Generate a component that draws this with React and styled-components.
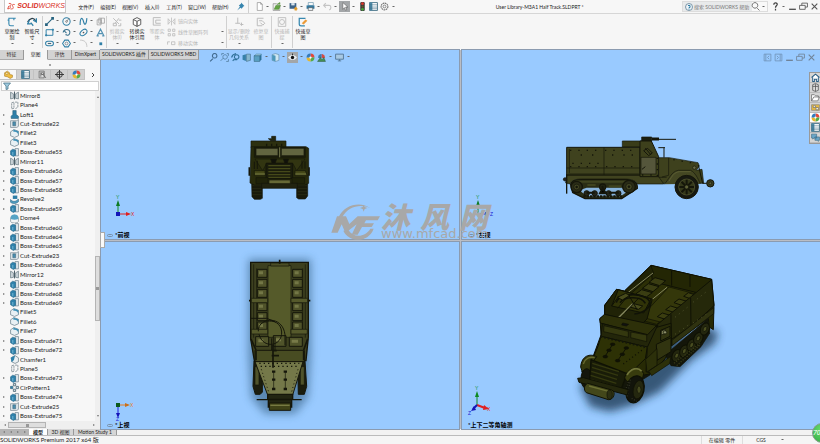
import styled, { createGlobalStyle } from 'styled-components';

const GlobalStyle = createGlobalStyle`
  * {
    box-sizing: border-box;
  }

  body {
    margin: 0;
    font-family: Lato, 'Noto Sans CJK SC', sans-serif;
    font-size: 6px;
    line-height: 8px;
    color: #222;
    background: #f6f6f6;
  }

  button,
  input {
    margin: 0;
    padding: 0;
    border: 0;
    background: none;
    font: inherit;
    color: inherit;
  }
`;

const blue = '#2f7fa6';

/* ---------- icons ---------- */

const glyphs = {
  page: <path d="M4 1h6l3 3v11H4zM10 1v3h3" fill="#fff" stroke="#777" />,
  open: (
    <>
      <path d="M2 3h6l2 2h4v10H2z" fill="#eee" stroke="#777" />
      <path d="M4 13l3-7h8l-3 7zM9 4l5-3v3" fill="#63a343" stroke="#4c8a30" />
    </>
  ),
  save: (
    <>
      <path d="M1 2h12v10H1z" fill="#3b6287" />
      <path d="M4 2h6v4H4z" fill="#dbe6ee" />
      <path d="M12 8l4 5H8zM10 13h4v2h-4z" fill="#e09b2c" />
    </>
  ),
  print: (
    <>
      <path d="M4 1h9v5H4z" fill="#fff" stroke="#4a7c99" />
      <path d="M1 6h14v6H1z" fill="#34799f" />
      <path d="M4 10h8v5H4z" fill="#e9f2f7" stroke="#444" />
    </>
  ),
  undo: <path d="M5 2L1 6l4 4M2 6h9c4 0 4 7 0 8" fill="none" stroke="#c4c4c4" strokeWidth="2" />,
  cursor: <path d="M5 1v12l3-3 2 5 2-1-2-5h4z" fill="#fff" stroke="#555" />,
  traffic: (
    <>
      <rect x="4" y="0" width="8" height="16" rx="2" fill="#3a3a3a" />
      <circle cx="8" cy="3" r="2.5" fill="#d8372c" />
      <circle cx="8" cy="8" r="2" fill="#645821" />
      <circle cx="8" cy="13" r="2.5" fill="#43a53c" />
    </>
  ),
  list: (
    <>
      <path d="M1 1h14v14H1z" fill="#fff" stroke="#39687f" strokeWidth="1.5" />
      <path d="M1 1h5v14H1z" fill="#4c8aa8" />
      <path d="M1 5h14M1 9h14M1 12h14" stroke="#39687f" />
    </>
  ),
  gear: (
    <>
      <circle cx="8" cy="8" r="6" fill="none" stroke="#777" strokeWidth="2" strokeDasharray="3 1" />
      <circle cx="8" cy="8" r="2.5" fill="none" stroke="#777" strokeWidth="1.5" />
    </>
  ),
  pin: <path d="M9 1l6 6-2 1-3 4-2-2-6 5 5-7-2-2 4-3z" fill="#3785ae" />,
  help: (
    <>
      <circle cx="8" cy="8" r="7" fill="#eef4f8" stroke="#5a7b91" strokeWidth="1.5" />
      <path d="M6 5h4v4H8v1M8 11v2" stroke={blue} strokeWidth="2" fill="none" />
    </>
  ),
  search: <path d="M11 11l4 4M7 1a5 5 0 1 0 .1 0z" fill="none" stroke="#666" strokeWidth="1.6" />,
  question: <path d="M5 5c0-5 7-4 6 0-1 2-3 2-3 5M8 12v3" fill="none" stroke="#444" strokeWidth="2.2" />,
  min: <path d="M2 13h12" stroke="#555" strokeWidth="2.4" />,
  restore: <path d="M5 6V2h10v7h-4M1 6h10v7H1z" fill="none" stroke="#555" strokeWidth="1.5" />,
  close: <path d="M3 3l10 10M13 3L3 13" stroke="#555" strokeWidth="2" />,
  dockLeft: <path d="M2 2h12v12H2zM5 2v12M11 5L8 8l3 3" fill="none" stroke="#556f8a" strokeWidth="1.5" />,
  dockRight: <path d="M2 2h12v12H2zM11 2v12M5 5l3 3-3 3" fill="none" stroke="#556f8a" strokeWidth="1.5" />,

  sketch: <path d="M14 2H3v9c0 3 1 3 3 3h5M3 5H1M11 2v3" fill="none" stroke="#3788b0" strokeWidth="1.8" />,
  dimension: (
    <>
      <path d="M1 8c3-6 9-8 13-2" fill="none" stroke="#2d3f49" strokeWidth="2" />
      <path d="M4 5l-3 6 5 0M10 5l5 3V2M6 9l4 5" fill="none" stroke={blue} strokeWidth="2" />
    </>
  ),
  line: <path d="M2 14L14 2M1 12h3v3H1zM12 1h3v3h-3z" fill="none" stroke="#25627f" strokeWidth="1.8" />,
  circle: (
    <>
      <circle cx="8" cy="8" r="6.5" fill="none" stroke={blue} strokeWidth="1.8" />
      <circle cx="8" cy="8" r="1.5" fill="none" stroke="#444" />
      <path d="M9 7l4-5" stroke="#444" />
    </>
  ),
  spline: <path d="M2 14C2 0 6 0 8 8s5 6 6-6" fill="none" stroke={blue} strokeWidth="2" />,
  planes: <path d="M2 5h7v9H2zM9 2h6v9H9zM5 2h4v9H5z" fill="none" stroke="#999" strokeWidth="1.3" />,
  rect: <path d="M2 3h12v10H2zM1 12h2v2H1zM13 2h2v2h-2z" fill="none" stroke={blue} strokeWidth="1.7" />,
  arc: <path d="M2 8c1-7 11-7 12-1 0 4-3 6-6 6M4 5l4 4M6 12h3" fill="none" stroke="#3c7490" strokeWidth="1.8" />,
  ellipse: (
    <>
      <ellipse cx="8" cy="8" rx="7" ry="4.5" transform="rotate(-40 8 8)" fill="none" stroke={blue} strokeWidth="1.8" />
      <circle cx="8" cy="8" r="1.5" fill="#555" />
    </>
  ),
  letter: <path d="M2 14L8 2l6 12M5 10h6M1 14h4M11 14h4" fill="none" stroke="#5593b3" strokeWidth="2" />,
  slot: (
    <>
      <rect x="1" y="4" width="14" height="8" rx="4" fill="none" stroke={blue} strokeWidth="1.8" />
      <path d="M5 7h6v2H5z" fill="#4a6573" />
    </>
  ),
  polygon: (
    <>
      <path d="M5 2h6l4 6-4 6H5L1 8z" fill="none" stroke={blue} strokeWidth="1.8" />
      <circle cx="8" cy="8" r="2.5" fill="none" stroke="#456" />
    </>
  ),
  fillet: <path d="M2 2c8 0 12 4 12 12" fill="none" stroke="#c2c2c2" strokeWidth="1.6" />,
  point: <path d="M6 6h5v5H6z" fill={blue} />,
  trim: <path d="M2 2l9 9M11 2l-6 8M2 10h5v4H2zM11 5h4M10 14h4v-4" fill="none" stroke="#bcbcbc" strokeWidth="1.6" />,
  convert: (
    <>
      <path d="M8 1l6 3v8l-6 3-6-3V4zM2 4l6 3 6-3" fill="#fff" stroke="#555" strokeWidth="1.5" />
      <path d="M8 7v8" stroke="#555" strokeWidth="2" />
    </>
  ),
  offset: <path d="M14 1H2v12h12M14 5H6v5h8" fill="none" stroke="#bcbcbc" strokeWidth="1.6" />,
  mirror: <path d="M2 3l4 5-4 5zM14 3l-4 5 4 5zM8 1v14" fill="none" stroke="#bcbcbc" strokeWidth="1.4" />,
  pattern: <path d="M2 2h4v4H2zM10 2h4v4h-4zM2 10h4v4H2zM10 10h4v4h-4z" fill="none" stroke="#bcbcbc" strokeWidth="1.5" />,
  move: <path d="M1 10V5h4M8 5h6v5H8z" fill="none" stroke="#bcbcbc" strokeWidth="1.5" />,
  relation: <path d="M6 1v9M2 10h8M10 12h5M12 9v5" fill="none" stroke="#bcbcbc" strokeWidth="1.6" />,
  repair: <path d="M12 2H2v12h8M5 6h5l4 4-3 3-4-4" fill="none" stroke="#bcbcbc" strokeWidth="1.6" />,
  snap: (
    <>
      <path d="M2 1h12v14H2z" fill="none" stroke="#bcbcbc" strokeWidth="1.4" />
      <circle cx="8" cy="8" r="4" fill="none" stroke="#bcbcbc" strokeWidth="1.4" />
    </>
  ),
  rapid: (
    <>
      <path d="M12 2H2v9c0 2 1 3 3 3h6" fill="none" stroke="#3788b0" strokeWidth="2" />
      <path d="M6 10l6-6 3 2-6 6z" fill="#eb9b38" />
    </>
  ),

  zoom: <path d="M2 15l5-5M10 1a4 4 0 1 0 .1 0z" fill="none" stroke="#41698d" strokeWidth="2" />,
  zoomArea: <path d="M1 14l5-5M9 3a4 4 0 1 0 .1 0zM3 4V1h4M12 1h3v4M15 11v4h-4" fill="none" stroke="#5883a5" strokeWidth="1.5" />,
  previous: <path d="M3 14l3-3M10 3a4 4 0 1 0 .1 0zM1 8c1-4 4-6 8-7M11 12H4" fill="none" stroke="#2f7098" strokeWidth="2" />,
  section: (
    <>
      <path d="M1 4l6-2v12l-6-2z" fill="#3680a8" />
      <path d="M8 2h7v11l-7 2z" fill="#87b7cd" stroke="#3d6980" />
    </>
  ),
  cube: (
    <>
      <path d="M2 5l4-3h9l-3 3z" fill="#b6dded" stroke="#3d7590" />
      <path d="M2 5h10v10H2z" fill="#5aa0c2" stroke="#35657d" />
      <path d="M12 5l3-3v9l-3 4z" fill="#2c7197" />
    </>
  ),
  display: (
    <>
      <path d="M2 3l6-2 6 2v10l-6 2-6-2z" fill="#cfe7f2" stroke="#56809a" />
      <path d="M2 3l6 2v10l-6-2z" fill="#4d97ba" />
    </>
  ),
  eye: (
    <>
      <path d="M0 8c4-6 12-6 16 0-4 6-12 6-16 0z" fill="#e8eef3" />
      <circle cx="8" cy="8" r="3" fill="#111" />
      <path d="M8 1v3" stroke="#222" strokeWidth="1.5" />
    </>
  ),
  appearance: (
    <>
      <path d="M8 8V1a7 7 0 0 1 7 7z" fill="#e3493b" />
      <path d="M8 8h7a7 7 0 0 1-7 7z" fill="#55aa48" />
      <path d="M8 8v7a7 7 0 0 1-7-7z" fill="#e7b72e" />
      <path d="M8 8H1a7 7 0 0 1 7-7z" fill="#337bbd" />
      <circle cx="8" cy="8" r="2" fill="#fff" />
    </>
  ),
  scene: (
    <>
      <path d="M8 9V2a6 6 0 0 1 6 7z" fill="#d84b43" />
      <path d="M8 9H2a6 6 0 0 1 6-7z" fill="#3a7cb2" />
      <path d="M1 15l5-7 3 4 3-4 3 7z" fill="#449055" stroke="#365f43" />
    </>
  ),
  monitor: <path d="M1 2h14v9H1zM8 11v3M5 14h6" fill="#a8c9e3" stroke="#547694" strokeWidth="1.6" />,

  part: (
    <>
      <path d="M1 5l5-3 4 3v3l5 1v4l-4 2-5-3-5-1z" fill="#efbd42" stroke="#a5771f" />
      <circle cx="5" cy="6" r="2" fill="#fff2be" stroke="#a5771f" />
    </>
  ),
  config: (
    <>
      <path d="M2 2h9v12H2zM5 4v8" fill="#ddd" stroke="#666" strokeWidth="1.4" />
      <path d="M6 5h4v3H6zM9 8l5 6" fill="#fff" stroke="#555" strokeWidth="1.4" />
    </>
  ),
  target: (
    <>
      <circle cx="8" cy="8" r="5" fill="none" stroke="#333" strokeWidth="1.7" />
      <path d="M8 0v16M0 8h16" stroke="#333" strokeWidth="1.7" />
    </>
  ),
  filter: <path d="M1 2h14l-5 6v6l-4 1V8z" fill="#9fcbe0" stroke="#457184" strokeWidth="1.5" />,

  Mirror: (
    <>
      <path d="M1 2l5 3v8l-5 1zM15 2l-5 3v8l5 1z" fill="#ccd6db" stroke="#61747e" strokeWidth="1.2" />
      <path d="M8 1v14" stroke="#3a4f5a" strokeWidth="1.6" />
    </>
  ),
  Plane: <path d="M3 3l4-1v11l-4 1zM9 2h5v9l-5 3" fill="none" stroke="#6c7b84" strokeWidth="1.3" strokeDasharray="4 1" />,
  Loft: <path d="M5 1h6v7l4 3v4H2v-4l3-3z" fill="#2e7fa8" stroke="#2a5e79" />,
  Cut: (
    <>
      <path d="M1 3h11l3-2v12l-3 2H1z" fill="#e0e8ec" stroke="#70828c" strokeWidth="1.2" />
      <path d="M5 5h5v7H5z" fill="#488eb0" stroke="#406476" />
    </>
  ),
  Fillet: (
    <>
      <path d="M1 5l6-4 8 3v8l-7 3-7-3z" fill="#e8f0f4" stroke="#5f7885" strokeWidth="1.2" />
      <path d="M6 1l9 3v7c-1-5-4-7-9-6z" fill="#3d90b7" />
    </>
  ),
  Boss: (
    <>
      <path d="M9 1h6v13H9z" fill="#e2e9ed" stroke="#687e8a" strokeWidth="1.2" />
      <path d="M1 5l4-3 5 2v9l-4 2-5-3z" fill="#2e81ab" stroke="#1f5f80" />
      <path d="M5 7v6" stroke="#8cc6df" strokeWidth="1.4" />
    </>
  ),
  Revolve: (
    <>
      <path d="M5 1h8v6H5z" fill="#2c7da6" />
      <path d="M1 8c4 5 10 4 14-1v5c-4 4-10 4-14 1z" fill="#4e9dc0" stroke="#235f7e" />
    </>
  ),
  Dome: (
    <>
      <path d="M1 8a7 6 0 0 1 14 0v5a7 3 0 0 1-14 0z" fill="#f2f5f6" stroke="#60747e" />
      <path d="M1 8a7 7 0 0 1 14 0 7 2 0 0 1-14 0z" fill="#56a4c6" />
    </>
  ),
  Chamfer: (
    <>
      <path d="M3 4l6-3 6 4v7l-6 3-6-3z" fill="#eaf0f3" stroke="#5d717c" strokeWidth="1.2" />
      <path d="M1 5l8-4-2 8-4 4z" fill="#2e81ab" />
    </>
  ),
  CirPattern: (
    <>
      <path d="M6 1h4v4H6zM1 6h4v4H1zM11 6h4v4h-4zM6 11h4v4H6z" fill="#d7e3e9" stroke="#45616f" strokeWidth="1.4" />
      <path d="M1 6h4v4H1z" fill={blue} />
    </>
  ),

  home: <path d="M1 8l7-6 7 6M3 8v7h3v-4h4v4h3V8" fill="#fff" stroke="#2c5f85" strokeWidth="1.8" />,
  library: <path d="M3 3l5-2 5 2v10l-5 2-5-2zM8 2v13M3 6h10" fill="#ddd" stroke="#555" strokeWidth="1.4" />,
  folder: <path d="M1 14V3h5l2 2h5v3M1 14l4-7h10l-3 7z" fill="#fff" stroke="#666" strokeWidth="1.3" />,
  palette: (
    <>
      <path d="M1 3h14v10H1z" fill="#e5b944" stroke="#777" />
      <path d="M4 5h4v3H4zM9 8h4v4H9z" fill="#fff" stroke="#555" />
    </>
  ),
  forum: <path d="M1 2h9v7H5l-2 2V9H1zM7 7h8v6h-2v2l-2-2H7z" fill="#6aa6c8" stroke="#35637e" />,
};

const Svg = styled.svg`
  display: block;
  flex: none;
  width: ${({ $size }) => $size}px;
  height: ${({ $size }) => $size}px;
  opacity: ${({ $faded }) => ($faded ? 0.6 : 1)};
`;

const Icon = ({ name, size = 9, faded }) => (
  <Svg viewBox="0 0 16 16" $size={size} $faded={faded} aria-hidden="true">
    {glyphs[name]}
  </Svg>
);

const Caret = styled.span`
  flex: none;
  align-self: center;
  margin: 0 2px;
  border: 1px solid transparent;
  border-top-color: #666;
  border-bottom: 0;
  width: 3px;
  height: 2px;
`;

const IconButton = styled.button`
  display: flex;
  flex: none;
  align-items: center;
  justify-content: center;
  width: ${({ $width }) => $width || 11}px;
  height: ${({ $height }) => $height || 11}px;
  background: ${({ $active }) => ($active ? '#a3a6a8' : 'transparent')};
`;

/* ---------- frame ---------- */

const Page = styled.div`
  display: flex;
  flex-direction: column;
  height: 100vh;
  overflow: hidden;
  position: relative;
`;

const TitleBar = styled.header`
  display: flex;
  align-items: center;
  height: 14px;
  border-bottom: 1px solid #d6d6d6;
  background: #f7f7f7;
`;

const Brand = styled.div`
  display: flex;
  align-items: center;
  gap: 2px;
  width: 62px;
  height: 13px;
  margin-left: 4px;
  padding-left: 2px;
  border: 1px solid #c8c8c8;
  border-top: 0;
  background: #fff;
  font: italic 7px/10px 'Liberation Sans', sans-serif;
  color: #d9301f;
`;

const Menu = styled.nav`
  display: flex;
  gap: 6px;
  margin-left: 12px;
  font-size: 5px;
  white-space: nowrap;
`;

const MenuItem = styled.button`
  min-width: 16px;
`;

const Divider = styled.span`
  flex: none;
  align-self: stretch;
  width: 1px;
  margin: ${({ $space }) => $space || 0}px 0;
  background: #d0d0d0;
`;

const QuickTools = styled.div`
  display: flex;
  align-items: center;
  align-self: stretch;
  margin-left: 5px;
`;

const DocumentTitle = styled.h1`
  flex: 1;
  margin: 0;
  text-align: center;
  font-size: 5px;
  font-weight: 400;
`;

const SearchBox = styled.label`
  display: flex;
  align-items: center;
  width: 86px;
  height: 11px;
  padding-left: 2px;
  border: 1px solid #ddd;
  background: linear-gradient(90deg, #e8eaeb 69px, #f9f9f9 69px);
`;

const SearchInput = styled.input`
  flex: 1;
  min-width: 0;
  margin-left: 1px;
  font-size: 5px;

  &::placeholder {
    color: #777;
    opacity: 1;
  }
`;

const WindowButtons = styled.div`
  display: flex;
  align-items: center;
  margin-left: 2px;
`;

const Ribbon = styled.section`
  display: flex;
  align-items: stretch;
  height: 36px;
  padding-left: 2px;
  background: #f6f6f6;
  font-size: 5px;
  line-height: 6px;
`;

const BigButton = styled.button`
  display: flex;
  flex-direction: column;
  align-items: center;
  gap: 1px;
  width: ${({ $wide }) => ($wide ? 24 : 20)}px;
  padding-top: 3px;
  color: ${({ disabled }) => (disabled ? '#b5b5b5' : '#222')};
  white-space: pre;
`;

const BigText = styled.span`
  height: 14px;
`;

const SketchGrid = styled.div`
  display: grid;
  grid-template-columns: repeat(3, 10px 7px) 10px;
  grid-template-rows: repeat(3, 11px);
  align-content: center;
  align-items: center;
  padding: 0 1px;
`;

const RowGroup = styled.div`
  display: flex;
  flex-direction: column;
  justify-content: center;
  width: 59px;
`;

const RowButton = styled.button`
  display: flex;
  align-items: center;
  gap: 2px;
  height: 11px;
  color: #b5b5b5;
`;

const Push = styled.span`
  flex: 1;
`;

const Body = styled.div`
  display: flex;
  flex: 1;
  min-height: 0;
  position: relative;
`;

const CommandTabs = styled.nav`
  display: flex;
  position: absolute;
  left: 0;
  top: 0;
  z-index: 2;
  height: 10px;
  font-size: 5px;
`;

const CommandTab = styled.button`
  width: ${({ $width }) => $width}px;
  border-right: 1px solid #999;
  border-bottom: 1px solid ${({ $active }) => ($active ? '#f6f6f6' : '#aaa')};
  background: ${({ $active }) => ($active ? '#f6f6f6' : '#d3d3d3')};
  line-height: 9px;
  white-space: nowrap;
`;

/* ---------- feature tree ---------- */

const Sidebar = styled.aside`
  display: flex;
  flex-direction: column;
  flex: none;
  width: 101px;
  padding-top: 10px;
  border-right: 1px solid #9aa5ae;
  background: #f7f7f7;
`;

const Grip = styled.div`
  height: 9px;
  display: grid;
  place-items: center;

  &::after {
    content: '';
    width: 2px;
    height: 2px;
    background: #888;
    border-radius: 50%;
  }
`;

const ManagerTabs = styled.div`
  display: flex;
  height: 11px;
`;

const ManagerTab = styled(IconButton)`
  width: 17px;
  border: 1px solid #c2c2c2;
  border-left: 0;
  background: ${({ $active }) => ($active ? '#f7f7f7' : '#d0d0d0')};
`;

const FilterBox = styled.label`
  display: flex;
  align-items: center;
  gap: 2px;
  height: 10px;
  margin: 1px 1px 0;
  padding-left: 1px;
  border: 1px solid #d0d0d0;
  background: #fff;
`;

const FilterInput = styled.input`
  flex: 1;
  min-width: 0;
`;

const TreeArea = styled.div`
  display: flex;
  flex: 1;
  min-height: 0;
`;

const Tree = styled.ul`
  display: flex;
  flex: 1;
  flex-direction: column;
  margin: 0;
  padding: 0;
  list-style: none;
`;

const TreeItem = styled.li`
  display: flex;
  flex: 1;
  align-items: center;
  min-height: 0;
`;

const Twisty = styled.span`
  width: 10px;
  padding-left: 3px;

  &::before {
    content: '';
    display: ${({ $shown }) => ($shown ? 'block' : 'none')};
    width: 2px;
    border: 1px solid transparent;
    border-left: 2px solid #777;
    border-right: 0;
  }
`;

const TreeLabel = styled.span`
  margin-left: 1px;
`;

const ScrollTrack = styled.div`
  display: flex;
  flex-direction: ${({ $across }) => ($across ? 'row' : 'column')};
  align-items: center;
  ${({ $across }) => ($across ? 'height: 8px; padding: 0 4px 0 3px;' : 'width: 5px; padding: 4px 0 3px;')}
  background: #efefef;
`;

const ScrollGap = styled.span`
  flex: ${({ $grow }) => $grow};
`;

const ScrollArrow = styled.span`
  border: 1px solid transparent;
  border-${({ $side }) => $side}: 2px solid #777;
`;

const Thumb = styled.div`
  flex: ${({ $grow }) => $grow};
  ${({ $across }) => ($across ? 'height: 6px;' : 'width: 5px;')}
  display: grid;
  place-items: center;
  border: 1px solid #b4b4b4;
  background: #dedede;

  &::after {
    content: '';
    width: 3px;
    height: 3px;
    background: #999;
  }
`;

/* ---------- viewport ---------- */

const Viewport = styled.main`
  display: grid;
  flex: 1;
  grid-template-columns: 1fr 1fr;
  grid-template-rows: 189fr 187fr;
  gap: 3px;
  position: relative;
  background: #babdc4;
`;

const Pane = styled.section`
  display: flex;
  flex-direction: column;
  position: relative;
  min-height: 0;
  outline: 1px solid #8b9bb0;
  background: #99caff;
`;

const Drawing = styled.svg`
  position: absolute;
  inset: 0;
  width: 100%;
  height: 100%;
`;

const ViewTools = styled.div`
  display: flex;
  align-items: center;
  justify-content: ${({ $end }) => ($end ? 'flex-end' : 'center')};
  height: 14px;
  padding-right: ${({ $end }) => ($end ? 3 : 0)}px;
  position: relative;
`;

const Triad = styled.svg`
  display: block;
  width: 28px;
  height: 38px;
  margin: auto 0 0 10px;
  overflow: visible;
  position: relative;
  font: 5px 'Liberation Sans', sans-serif;
`;

const ViewName = styled.div`
  display: flex;
  align-items: center;
  gap: 2px;
  height: 8px;
  padding-left: 6px;
  position: relative;
  font-weight: 700;
  color: #000;
`;

const LinkMark = styled.span`
  width: 6px;
  height: 3px;
  border: 1px solid #7990a8;
  border-radius: 2px;
`;

const PanelHandle = styled.button`
  position: absolute;
  left: -1px;
  top: 48%;
  width: 5px;
  height: 16px;
  border: 1px solid #aaa;
  background: #fafafa;
`;

const Watermark = styled.div`
  display: flex;
  position: absolute;
  left: 32%;
  top: 40%;
  color: #a8a8a8;
`;

const WatermarkLogo = styled.svg`
  width: 50px;
  height: 40px;
`;

const WatermarkName = styled.div`
  display: flex;
  gap: 10px;
  font: italic 900 29px/26px 'Noto Sans CJK SC', sans-serif;
`;

const WatermarkSite = styled.div`
  font: 13px/11px 'DejaVu Sans', sans-serif;
`;

const TaskPane = styled.nav`
  position: absolute;
  right: 0;
  top: 22px;
  width: 11px;
  border: 1px solid #999;
  border-right: 0;
  background: #d5d5d5;
`;

const TaskTab = styled(IconButton)`
  width: 10px;
  height: 10px;
  background: ${({ $active }) => ($active ? '#fff' : '#d5d5d5')};
  border-bottom: 1px solid #bbb;
`;

/* ---------- footer ---------- */

const SheetTabs = styled.nav`
  display: flex;
  height: 7px;
  border-bottom: 1px solid #bbb;
  background: #f2f2f2;
  font-size: 5px;
  line-height: 6px;
`;

const SheetNav = styled.div`
  display: flex;
  align-items: center;
  justify-content: space-around;
  width: 29px;
  background: #b5b5b5;
`;

const SheetTab = styled.button`
  width: ${({ $width }) => $width}px;
  border-right: 1px solid #999;
  background: ${({ $active }) => ($active ? '#fff' : '#d6d6d6')};
  font-weight: ${({ $active }) => ($active ? 700 : 400)};
  white-space: nowrap;
`;

const StatusBar = styled.footer`
  display: flex;
  align-items: center;
  height: 8px;
  background: #f5f5f5;
`;

const StatusCell = styled.span`
  width: ${({ $width }) => $width}px;
  border-left: 1px solid #ddd;
  text-align: center;
  font-size: 5px;
`;

const Bubble = styled.div`
  position: absolute;
  right: -12px;
  bottom: 1px;
  width: 20px;
  height: 20px;
  border: 1px solid #8a9a8a;
  border-radius: 50%;
  background: radial-gradient(circle at 50% 30%, #6bdc6f, #2fae42);
  font: italic 7px/18px Roboto, sans-serif;
  color: #fff;
`;

/* ---------- data ---------- */

const menus = ['文件(F)', '编辑(E)', '视图(V)', '插入(I)', '工具(T)', '窗口(W)', '帮助(H)'];

const commandTabs = [
  ['特征', 24],
  ['草图', 24],
  ['评估', 24],
  ['DimXpert', 28],
  ['SOLIDWORKS 插件', 49],
  ['SOLIDWORKS MBD', 50],
];

const sketchTools = [
  ['line', 'circle', 'spline', 'planes'],
  ['rect', 'arc', 'ellipse', 'letter'],
  ['slot', 'polygon', 'fillet', 'point'],
];

const features = [
  'Mirror8', 'Plane4', 'Loft1', 'Cut-Extrude22', 'Fillet2', 'Fillet3', 'Boss-Extrude55',
  'Mirror11', 'Boss-Extrude56', 'Boss-Extrude57', 'Boss-Extrude58', 'Revolve2',
  'Boss-Extrude59', 'Dome4', 'Boss-Extrude60', 'Boss-Extrude64', 'Boss-Extrude65',
  'Cut-Extrude23', 'Boss-Extrude66', 'Mirror12', 'Boss-Extrude67', 'Boss-Extrude68',
  'Boss-Extrude69', 'Fillet5', 'Fillet6', 'Fillet7', 'Boss-Extrude71', 'Boss-Extrude72',
  'Chamfer1', 'Plane5', 'Boss-Extrude73', 'CirPattern1', 'Boss-Extrude74',
  'Cut-Extrude25', 'Boss-Extrude75',
];

const expandable = ['Loft', 'Cut', 'Boss', 'Revolve'];

const taskTabs = ['home', 'library', 'folder', 'palette', 'appearance', 'list', 'forum'];

/* ---------- half track views ---------- */

const ink = '#15160a';

const FrontView = () => (
  <g transform="translate(220 120) scale(.3333)" stroke={ink} strokeWidth="2">
    <path d="M145 56h10v-7h12v13h-15z" fill="#222610" />
    <path d="M93 63h105v20H93z" fill="#2d3010" />
    <path d="M140 71v8M155 71v8M170 71v8M185 71v8" strokeWidth="4" />
    <path d="M95 190h32v45l-6 3h-18l-7-8zM230 190h33v38l-7 9h-20l-6-4z" fill="#191a0b" />
    <path d="M97 197h28M97 206h28M97 215h28M97 224h28M233 197h28M233 206h28M233 215h28M233 224h28" stroke="#2d3018" />
    <path d="M93 80h165l8 5v105l-12 5H103l-13-6z" fill="#282b0c" />
    <path d="M88 142v25M267 142v25" strokeWidth="5" />
    <path d="M103 82h153v30H103z" fill="#1d1f0d" />
    <path d="M108 85h66v22h-66zM184 85h68v22h-68z" fill="#626540" />
    <path d="M179 82v30" stroke="#74764b" strokeWidth="3" />
    <path d="M105 117h150l-25 35-12-22h-78l-12 22z" fill="#323511" />
    <path d="M152 117h18l-4 12h-10zM190 117h16l-4 12h-8z" fill="#11120a" />
    <path d="M138 130h80v46h-80z" fill="#1b1d0c" strokeWidth="3" />
    <path d="M145 137h66M145 146h66M145 155h66M145 164h66M145 172h66" stroke="#454919" strokeWidth="4" />
    <path d="M103 152h32v15h-32zM225 152h31l6 15h-37z" fill="#454818" />
    <path d="M105 162h30M226 162h32" stroke="#747743" strokeWidth="3" />
    <path d="M108 173h36v18h-36zM216 173h38v18h-38z" fill="#202309" />
    <path d="M125 190h107v15H125z" fill="#222410" />
    <path d="M147 180h64v11h-64z" fill="#666936" />
    <path d="M103 125v22M112 122v25M246 121v25M255 124v22" strokeWidth="3" />
  </g>
);

const wheelSpokes = [0, 45, 90, 135, 180, 225, 270, 315];

const SideView = () => (
  <g transform="translate(550 125) scale(.3333)" stroke={ink} strokeWidth="2">
    <path d="M62 178c4-15 20-15 35-15h128c24 0 38 7 37 27l-47 31H105L68 203z" fill="#2a2d15" strokeWidth="4" />
    <path d="M88 196l22-8h110l16 9-24 17H111z" fill="#87b3dc" stroke="none" />
    <path d="M78 170h170M112 180h25M176 184h38" stroke="#3f431f" strokeWidth="6" />
    <path d="M100 214h116" strokeWidth="7" strokeDasharray="7 3" />
    {[[80, 186, 17], [237, 185, 19], [158, 186, 9]].map(([x, y, r]) => (
      <g key={x}>
        <circle cx={x} cy={y} r={r} fill="#2a2c17" strokeWidth="4" />
        <circle cx={x} cy={y} r={r / 2} fill="#444725" />
        <circle cx={x} cy={y} r="3" fill={ink} />
      </g>
    ))}
    {[110, 134, 176, 205].map((x) => (
      <circle key={x} cx={x} cy="205" r="8" fill="#25271b" strokeWidth="3" />
    ))}
    <path d="M110 203h24M176 203h30M158 190l-8 15h18z" strokeWidth="6" />
    <path d="M50 150h300l-10 27h-78c-4-10-20-15-37-15H95c-18 0-30 4-35 15l-13-3z" fill="#40431f" />
    <path d="M217 48h87v18h-87z" fill="#393c19" />
    <path d="M275 36h30v12h-30z" fill="#1c1f0f" />
    <path d="M305 42h22" strokeWidth="9" />
    <path d="M326 43h52" strokeWidth="3" />
    <path d="M50 67h220v83H50z" fill="#3f421e" strokeWidth="3" />
    <path d="M50 129h220M55 147h212M162 67v83M58 72v72" />
    <path d="M270 48h34l22 47v60h-56z" fill="#3d401c" strokeWidth="3" />
    <path d="M273 97h45v50h-45z" fill="#55563b" />
    <path d="M281 77l12-7 14 14-11 8zM286 69l17 21" fill="none" strokeWidth="3" />
    <path d="M276 133l10-8" strokeWidth="3" />
    <path d="M325 68h20M342 68v30" strokeWidth="3" />
    <path d="M326 98h32l86 15 4 10-9 13 17-3 5 42H340l-14-20z" fill="#3e411d" strokeWidth="2" />
    <path d="M356 99v52l-20 5M326 157h24" fill="none" />
    <path d="M342 178c16-14 20-38 43-42h37c14 7 21 23 29 40" fill="#444723" />
    <path d="M357 169c10-18 17-27 31-29h34" fill="none" stroke="#66683b" />
    <circle cx="410" cy="186" r="35" fill="#171910" strokeWidth="3" />
    <circle cx="410" cy="186" r="24" fill="#35391b" stroke="#5b5e35" />
    {wheelSpokes.map((a) => (
      <path key={a} d="M410 183V164" strokeWidth="6" transform={`rotate(${a} 410 186)`} />
    ))}
    <circle cx="410" cy="186" r="6" fill="#5f6238" />
    <path d="M445 120l13 55h12" fill="none" strokeWidth="3" />
    <circle cx="433" cy="128" r="5" fill="#696b46" />
    <circle cx="481" cy="175" r="11" fill="#393c20" strokeWidth="3" />
    <circle cx="481" cy="175" r="4" fill="#5d6039" />
    <path d="M50 148v58" strokeWidth="4" />
    <circle cx="45" cy="163" r="5" fill="#222" />
    <path
      d="M60 76h100M165 76h100M92 90h15M126 90h15M186 90h15M220 90h38M60 125h98M168 125h95M370 104l70 12M276 150h45M67 115h90"
      strokeWidth="4"
      strokeDasharray="4 21"
    />
    <path d="M322 98v55" strokeWidth="4" strokeDasharray="4 13" />
  </g>
);

const seatRows = [73, 103, 133, 173, 203, 231];

const TopView = () => (
  <g transform="translate(235 245) scale(.3333)" stroke={ink} strokeWidth="2">
    <path d="M40 42h188v285l-8 130-40 50H90l-42-50-8-130z" fill="#2c5577" stroke="none" filter="url(#soft)" opacity=".55" />
    <path d="M57 348h25v94l-7 6H61l-7-24zM188 348h22l5 76-7 24h-18z" fill="#1b1d0e" strokeWidth="3" />
    <path d="M60 365h12v55H60zM196 365h12v55h-12z" fill="#4f532b" />
    <path d="M47 52h173v225l-7 70H58l-11-65z" fill="#3d401f" strokeWidth="4" />
    <path d="M99 62h69v215H99z" fill="#555a2a" />
    <path d="M107 54h55v9h-55z" fill="#4b4e25" />
    <path d="M134 44v12M42 167h12M214 167h12M52 165h46M168 165h50" strokeWidth="5" />
    <path d="M65 70v195M203 70v195M56 58v220M211 58v220" />
    {seatRows.map((y) => (
      <g key={y}>
        <path d={`M67 ${y}h29v24H67zM173 ${y}h29v24h-29z`} fill="#50532a" strokeWidth="3" />
        <path d={`M72 ${y + 6}h12v9H72zM179 ${y + 6}h12v9h-12z`} fill="#737746" stroke="none" />
      </g>
    ))}
    <path d="M49 160h49v13H49zM168 160h50v13h-50zM49 253h49v14H49zM168 253h49v14h-49z" fill="#55592b" />
    <path d="M62 275h39v29H62zM115 272h38v32h-38zM163 277h39v27h-39z" fill="#50542a" strokeWidth="3" />
    <path d="M70 283h15v9H70zM123 280h15v9h-15zM170 284h19v9h-19z" fill="#777a48" stroke="none" />
    <path d="M70 259c-3-40 72-52 80 10v32M72 268c12 45 70 37 68-7-2-27-24-36-45-32" fill="none" strokeWidth="3" />
    <path d="M45 220h50l25 10M110 280v36M120 275v40" fill="none" strokeWidth="3" />
    <path d="M60 316h148v34H60z" fill="#484c22" strokeWidth="3" />
    <path d="M48 282l15 33M218 282l-12 33M63 318v28M206 318v28" fill="none" strokeWidth="5" />
    <path d="M60 350h144l-31 100H98z" fill="#747849" strokeWidth="3" />
    <path d="M73 355h120M77 364h114" strokeWidth="4" strokeDasharray="4 9" />
    <path d="M79 373l23 71M189 373l-20 71" fill="none" strokeWidth="3" strokeDasharray="3 8" />
    <path d="M116 378v55M151 378v55" />
    {[380, 404, 432].map((y) => (
      <path key={y} d={`M111 ${y}h10M146 ${y}h10`} strokeWidth="7" />
    ))}
    <path d="M114 300v68M110 332h22M115 317h10" strokeWidth="5" />
    <path d="M98 448h75v15H98zM65 464h135M100 462v24h70v-24" fill="#222512" strokeWidth="4" />
    <path d="M103 474h64v22h-64z" fill="#404318" strokeWidth="3" />
    <path d="M106 481h58" stroke="#777a42" strokeWidth="4" />
  </g>
);

const IsoView = () => (
  <g transform="translate(565 255) scale(.3333)" stroke="#0f1104" strokeWidth="2" strokeLinejoin="round">
    <path d="M45 395l30 60 60 15 70-20 80-40 95-95 70-50 10-35-40-15-330 120z" fill="#16304c" stroke="none" filter="url(#soft)" opacity=".75" />
    <path d="M300 300L430 190L434 235L408 275L345 335L318 332z" fill="#14160a" />
    {[[335, 302], [358, 288], [380, 270], [400, 250], [420, 222]].map(([x, y]) => (
      <g key={x}>
        <ellipse cx={x} cy={y} rx="13" ry="19" fill="#24270f" strokeWidth="3" transform={`rotate(25 ${x} ${y})`} />
        <ellipse cx={x} cy={y} rx="5" ry="8" fill="#4a4e21" transform={`rotate(25 ${x} ${y})`} />
      </g>
    ))}
    <path d="M327 325l78-60M335 332l70-62" stroke="#353816" strokeWidth="4" strokeDasharray="4 4" />
    <path d="M50 350L95 300L185 330L262 330L255 360L215 385L180 412L80 392z" fill="#14160a" />
    <path d="M258 31L440 73L447 150L445 224L433 216L430 190L320 270L262 355L180 372L75 330L108 240L105 190L119 180L119 150L155 103L178 108z" fill="#272a05" strokeWidth="3" />
    <path d="M262 38L428 80L275 208L178 182L160 130L178 112z" fill="#2c2f06" />
    <path d="M258 31L440 73L433 122L262 80z" fill="#232604" strokeWidth="3" />
    <path d="M312 96L412 122L290 202L228 186z" fill="#34370a" />
    <path d="M258 33L178 110L196 118L266 55z" fill="#202306" />
    <path d="M270 68l32 9-18 15-32-10zM250 86l32 9-18 15-32-10zM230 104l32 9-18 13-32-9z" fill="#3a3d12" strokeWidth="3" />
    <path d="M342 132l30 9-16 12-29-10zM317 153l29 9-15 12-29-10zM292 174l30 9-15 12-30-10z" fill="#3b3e10" strokeWidth="3" />
    <path d="M370 113l31 10-14 12-31-11z" fill="#3a3d10" strokeWidth="3" />
    <path d="M190 112l74-58M240 151l66-54" stroke="#85875e" strokeWidth="3" />
    <path d="M320 47v45M375 60v36" strokeWidth="3" />
    <path d="M278 208L440 74L447 152L320 268L277 290z" fill="#25280a" strokeWidth="3" />
    <path d="M377 128l1 88M318 178v86M321 252l124-84" fill="none" strokeWidth="3" />
    <path d="M321 256L446 158V176L321 272z" fill="#2f3210" />
    <path d="M330 187l42-34M384 142l44-35M330 238l42-29M384 204l45-30" stroke="#63663c" strokeWidth="2" strokeDasharray="3 12" />
    <path d="M119 152L154 103L262 132L246 192L230 208L119 178z" fill="#202307" strokeWidth="3" />
    <path d="M160 104l98 28-22 42-96-21z" fill="#303308" strokeWidth="3" />
    <path d="M154 143c8-33 92-31 101 0 2 13-18 31-47 34M165 143c14-20 65-20 76 2" fill="none" stroke="#101207" strokeWidth="5" />
    <path d="M157 127l25-12 13 6-23 14zM203 145l30 8-12 10-27-7z" fill="#484b1c" strokeWidth="3" />
    <path d="M144 204l59-58" stroke="#85885f" strokeWidth="4" />
    <path d="M141 152l20-28M158 160l27-33M191 120l26 45M222 128l-41 45" strokeWidth="3" />
    <path d="M104 192L118 178L278 212L250 243L106 204z" fill="#2d3009" strokeWidth="3" />
    <path d="M173 204l18 4-7 5-14-3z" fill="#111" />
    <path d="M112 206l136 33 27-28v35l-28 31-139-32z" fill="#23260a" strokeWidth="3" />
    <path d="M117 212l73 17v18l-74-17zM198 231l47 9v20l-48-12z" fill="#34380f" />
    <path d="M108 244l139 32-6 35-55 53-108-42 21-48z" fill="#2d3105" strokeWidth="3" />
    <path d="M107 245l137 32" stroke="#14170a" strokeWidth="6" strokeDasharray="5 6" />
    <path d="M175 327l62-46" strokeWidth="4" strokeDasharray="3 8" />
    <path d="M143 268l-24 38M184 279l-26 38" fill="none" strokeWidth="3" />
    {[[143, 268], [132, 286], [121, 305], [184, 279], [172, 298], [158, 317]].map(([x, y]) => (
      <ellipse key={x} cx={x} cy={y} rx="7" ry="4" fill="#101204" />
    ))}
    <path d="M275 217L318 205L320 268L300 312L258 354L243 350L247 277z" fill="#272a08" strokeWidth="3" />
    <path d="M287 226l28-12v30l-28 14zM274 268l44-20v42l-42 26z" fill="#313410" strokeWidth="3" />
    <path d="M289 228l12-5v12l-12 5z" fill="#777a52" />
    <circle cx="300" cy="232" r="5" fill="#8a8d66" />
    <path d="M242 313l34-32v50l-30 20zM251 348l67-44-4 22-54 36z" fill="#2c300a" />
    <path d="M47 336c3-35 28-41 48-31l-17 23v35H56z" fill="#33370e" strokeWidth="3" />
    <path d="M55 327c5-17 20-23 34-19" fill="none" stroke="#686b31" strokeWidth="4" />
    <ellipse cx="65" cy="371" rx="17" ry="30" fill="#14160c" strokeWidth="3" />
    <path d="M78 314l108 42-18 48-94-24z" fill="#191c08" strokeWidth="4" />
    <path d="M82 325l80 25M81 337l78 24M79 349l77 24M77 361l77 24M75 373l79 23" stroke="#34380f" strokeWidth="4" />
    <path d="M179 369c7-31 43-40 57-13l-4 17-46 7z" fill="#383c0e" strokeWidth="3" />
    <path d="M186 360c12-20 32-25 44-11" stroke="#71753a" strokeWidth="5" fill="none" />
    <ellipse cx="210" cy="403" rx="27" ry="41" fill="#12140b" strokeWidth="4" transform="rotate(12 210 403)" />
    <ellipse cx="220" cy="404" rx="15" ry="28" fill="#24270f" transform="rotate(12 220 404)" />
    <ellipse cx="222" cy="404" rx="6" ry="11" fill="#44481f" />
    <path d="M190 381l-10 28M196 374l-10 53M200 430l15 9" stroke="#303323" strokeWidth="4" strokeDasharray="3 5" />
    <path d="M38 370l17-2 135 36-3 16-145-38z" fill="#24270c" strokeWidth="3" />
    <path d="M68 385l72 20c15 6 5 31-10 29l-66-21c-9-7-7-24 4-28z" fill="#43471a" strokeWidth="3" />
    <path d="M72 393l62 17" stroke="#6b6f33" strokeWidth="4" />
    <ellipse cx="134" cy="419" rx="8" ry="14" fill="#2b2e12" />
  </g>
);

const Blur = () => (
  <filter id="soft" x="-30%" y="-30%" width="160%" height="160%">
    <feGaussianBlur stdDeviation="12" />
  </filter>
);

/* ---------- parts ---------- */

const Tool = ({ name, label, caret, faded, ...rest }) => (
  <>
    <IconButton aria-label={label || name} {...rest}>
      <Icon name={name} faded={faded} />
    </IconButton>
    {caret && <Caret />}
  </>
);

const Command = ({ icon, text, caret, ...rest }) => (
  <BigButton {...rest}>
    <Icon name={icon} size={10} />
    <BigText>{text}</BigText>
    {caret && <Caret />}
  </BigButton>
);

const Header = () => (
  <TitleBar>
    <Brand>
      <svg width="12" height="11" viewBox="0 0 36 33" aria-hidden="true">
        <path d="M8 3h6c7 0 5 8-2 11M12 14c5 1 4 14-9 13l5-13M34 8c-9-2-13 1-9 7 5 7 4 14-10 12" fill="none" stroke="#d9301f" strokeWidth="3.5" />
      </svg>
      <span>
        <b>SOLID</b>WORKS
      </span>
    </Brand>
    <Menu>
      {menus.map((m) => (
        <MenuItem key={m}>{m}</MenuItem>
      ))}
    </Menu>
    <QuickTools>
      <Tool name="pin" label="固定" $width={15} />
      <Divider />
    </QuickTools>
    <QuickTools>
      <Tool name="page" caret $width={10} />
      <Tool name="open" caret $width={10} />
      <Tool name="save" caret $width={10} />
      <Tool name="print" caret $width={10} />
      <Tool name="undo" caret $width={10} />
      <Tool name="cursor" caret $active />
      <Tool name="traffic" />
      <Tool name="list" />
      <Tool name="gear" caret />
    </QuickTools>
    <DocumentTitle>User Library-M3A1 Half Track.SLDPRT *</DocumentTitle>
    <SearchBox>
      <Icon name="help" size={8} />
      <SearchInput placeholder="搜索 SOLIDWORKS 帮助" aria-label="搜索" />
      <Icon name="search" />
      <Caret />
    </SearchBox>
    <WindowButtons>
      <Tool name="question" caret $width={10} />
      <Tool name="min" />
      <Tool name="restore" />
      <Tool name="close" />
    </WindowButtons>
  </TitleBar>
);

const CommandRibbon = () => (
  <Ribbon>
    <Command icon="sketch" text={'草图绘\n制'} caret />
    <Command icon="dimension" text={'智能尺\n寸'} caret />
    <Divider $space={2} />
    <SketchGrid>
      {sketchTools.map((row) =>
        row.map((name, i) => <Tool key={name} name={name} $width={10} caret={i < 3} />)
      )}
    </SketchGrid>
    <Divider $space={2} />
    <Command icon="trim" text={'剪裁实\n体(I)'} caret disabled />
    <Command icon="convert" text={'转换实\n体引用'} caret />
    <Command icon="offset" text={'等距实\n体'} disabled />
    <RowGroup>
      <RowButton disabled>
        <Icon name="mirror" />
        镜向实体
      </RowButton>
      <RowButton disabled>
        <Icon name="pattern" />
        线性草图阵列
        <Push />
        <Caret />
      </RowButton>
      <RowButton disabled>
        <Icon name="move" />
        移动实体
        <Push />
        <Caret />
      </RowButton>
    </RowGroup>
    <Divider $space={2} />
    <Command icon="relation" text={'显示/删除\n几何关系'} caret disabled $wide />
    <Command icon="repair" text={'修复草\n图'} disabled />
    <Divider $space={2} />
    <Command icon="snap" text={'快速捕\n捉'} caret disabled />
    <Divider $space={2} />
    <Command icon="rapid" text={'快速草\n图'} />
  </Ribbon>
);

const FeatureManager = () => (
  <Sidebar>
    <Grip />
    <ManagerTabs>
      {['part', 'list', 'config', 'target', 'appearance'].map((name, i) => (
        <ManagerTab key={name} aria-label={name} $active={i === 0}>
          <Icon name={name} />
        </ManagerTab>
      ))}
      <IconButton aria-label="更多" $width={15}>
        <svg width="4" height="6" viewBox="0 0 4 6">
          <path d="M1 1l2 2-2 2" fill="none" stroke="#444" />
        </svg>
      </IconButton>
    </ManagerTabs>
    <FilterBox>
      <Icon name="filter" size={8} />
      <FilterInput aria-label="过滤" />
    </FilterBox>
    <TreeArea>
      <Tree>
        {features.map((feature) => {
          const kind = feature.replace(/(-Extrude)?\d+$/, '');
          return (
            <TreeItem key={feature}>
              <Twisty $shown={expandable.includes(kind)} />
              <Icon name={kind} />
              <TreeLabel>{feature}</TreeLabel>
            </TreeItem>
          );
        })}
      </Tree>
      <ScrollTrack>
        <ScrollArrow $side="bottom" />
        <ScrollGap $grow={158} />
        <Thumb $grow={64} />
        <ScrollGap $grow={94} />
        <ScrollArrow $side="top" />
      </ScrollTrack>
    </TreeArea>
    <ScrollTrack $across>
      <ScrollArrow $side="right" />
      <ScrollGap $grow={2} />
      <Thumb $across $grow={36} />
      <ScrollGap $grow={46} />
      <ScrollArrow $side="left" />
    </ScrollTrack>
  </Sidebar>
);

const Views = () => (
  <Viewport>
    <Pane>
      <Drawing viewBox="101 50 358 189">
        <FrontView />
      </Drawing>
      <ViewTools>
        <Tool name="zoom" />
        <Tool name="zoomArea" />
        <Tool name="previous" />
        <Tool name="section" />
        <Tool name="cube" caret />
        <Tool name="display" caret $width={10} />
        <Tool name="eye" caret $active />
        <Tool name="appearance" />
        <Tool name="scene" caret />
        <Tool name="monitor" caret />
      </ViewTools>
      <Triad viewBox="0 0 28 38">
        <path d="M7 21V10" stroke="#138a2c" />
        <path d="M5 13l2-6 2 6z" fill="#0d7a22" />
        <path d="M7 21h10" stroke="#e02020" />
        <path d="M15 19l5 2-5 2z" fill="#e02020" />
        <path d="M5 19h4v4H5z" fill="#1414b8" />
        <text x="5" y="6" fill="#129038">Y</text>
        <text x="20" y="23" fill="#e02020">X</text>
      </Triad>
      <ViewName>
        <LinkMark />
        *前视
      </ViewName>
    </Pane>
    <Pane>
      <Drawing viewBox="462 50 358 189">
        <SideView />
      </Drawing>
      <ViewTools $end>
        <Tool name="dockLeft" faded />
        <Tool name="dockRight" faded />
        <Tool name="min" faded />
        <Tool name="restore" faded />
        <Tool name="close" faded />
      </ViewTools>
      <Triad viewBox="0 0 28 38">
        <path d="M6 21V10" stroke="#138a2c" />
        <path d="M4 13l2-6 2 6z" fill="#0d7a22" />
        <path d="M6 21h10" stroke="#1a1ad0" />
        <path d="M13 19l5 2-5 2z" fill="#1414b8" />
        <text x="4" y="6" fill="#129038">Y</text>
        <text x="18" y="23" fill="#1a1ad0">Z</text>
      </Triad>
      <ViewName>
        <LinkMark />
        *左视
      </ViewName>
    </Pane>
    <Pane>
      <Drawing viewBox="101 242 358 187">
        <Blur />
        <TopView />
      </Drawing>
      <Triad viewBox="0 0 28 38">
        <path d="M7 22h10" stroke="#e87a18" />
        <path d="M14 20l5 2-5 2z" fill="#c9701c" />
        <path d="M7 22v10" stroke="#2020d8" />
        <path d="M5 30h4l-2 5z" fill="#1414b8" />
        <path d="M5 20h4v4H5z" fill="#0b5a1c" />
        <text x="19" y="24" fill="#e87a18">X</text>
        <text x="5" y="38" fill="#2020d8">Z</text>
      </Triad>
      <ViewName>
        <LinkMark />
        *上视
      </ViewName>
    </Pane>
    <Pane>
      <Drawing viewBox="462 242 358 187">
        <IsoView />
      </Drawing>
      <Triad viewBox="0 0 28 38">
        <path d="M5 22V13" stroke="#138a2c" />
        <path d="M3 14l2-6 2 6z" fill="#0d8a22" />
        <path d="M5 22l8 3" stroke="#e02020" strokeWidth="2" />
        <path d="M12 22l5 4-6 1z" fill="#e02020" />
        <path d="M5 22l-4 4" stroke="#1414b8" strokeWidth="2" />
        <path d="M2 23l2 4-5 1z" fill="#1414b8" />
        <text x="3" y="7" fill="#129038">Y</text>
        <text x="15" y="28" fill="#e02020">X</text>
        <text x="-4" y="32" fill="#1a1ad0">Z</text>
      </Triad>
      <ViewName>*上下二等角轴测</ViewName>
    </Pane>
    <PanelHandle aria-label="折叠" />
    <Watermark>
      <WatermarkLogo viewBox="0 0 150 120" aria-hidden="true">
        <path d="M23 45C40 8 88-4 119 19 88 4 51 14 34 45zM37 86c18 38 75 37 91-6h-10c-16 27-52 28-66 3z" fill="currentColor" />
        <path d="M18 43h27l10 23 25-23h67l-7 12h-35l-5 9h29l-7 11H93L80 98H62l15-31-27 21h-9L32 67 20 92H1z" fill="currentColor" />
        <path d="M98 8l3 7 8 3-8 3-3 8-3-8-8-3 8-3z" fill="currentColor" />
      </WatermarkLogo>
      <div>
        <WatermarkName>
          <span>沐</span>
          <span>风</span>
          <span>网</span>
        </WatermarkName>
        <WatermarkSite>www.mfcad.com</WatermarkSite>
      </div>
    </Watermark>
    <TaskPane>
      {taskTabs.map((name) => (
        <TaskTab key={name} aria-label={name} $active={name === 'appearance'}>
          <Icon name={name} />
        </TaskTab>
      ))}
    </TaskPane>
  </Viewport>
);

export default function App() {
  return (
    <Page>
      <GlobalStyle />
      <Header />
      <CommandRibbon />
      <Body>
        <CommandTabs>
          {commandTabs.map(([name, width]) => (
            <CommandTab key={name} $width={width} $active={name === '草图'}>
              {name}
            </CommandTab>
          ))}
        </CommandTabs>
        <FeatureManager />
        <Views />
      </Body>
      <SheetTabs>
        <SheetNav>
          <ScrollArrow $side="right" />
          <ScrollArrow $side="right" />
          <ScrollArrow $side="left" />
          <ScrollArrow $side="left" />
        </SheetNav>
        <SheetTab $width={19} $active>模型</SheetTab>
        <SheetTab $width={26}>3D 视图</SheetTab>
        <SheetTab $width={43}>Motion Study 1</SheetTab>
      </SheetTabs>
      <StatusBar>
        <span>SOLIDWORKS Premium 2017 x64 版</span>
        <Push />
        <StatusCell $width={41}>在编辑 零件</StatusCell>
        <StatusCell $width={37}>CGS</StatusCell>
        <Caret />
        <StatusCell $width={34} />
      </StatusBar>
      <Bubble>70</Bubble>
    </Page>
  );
}
